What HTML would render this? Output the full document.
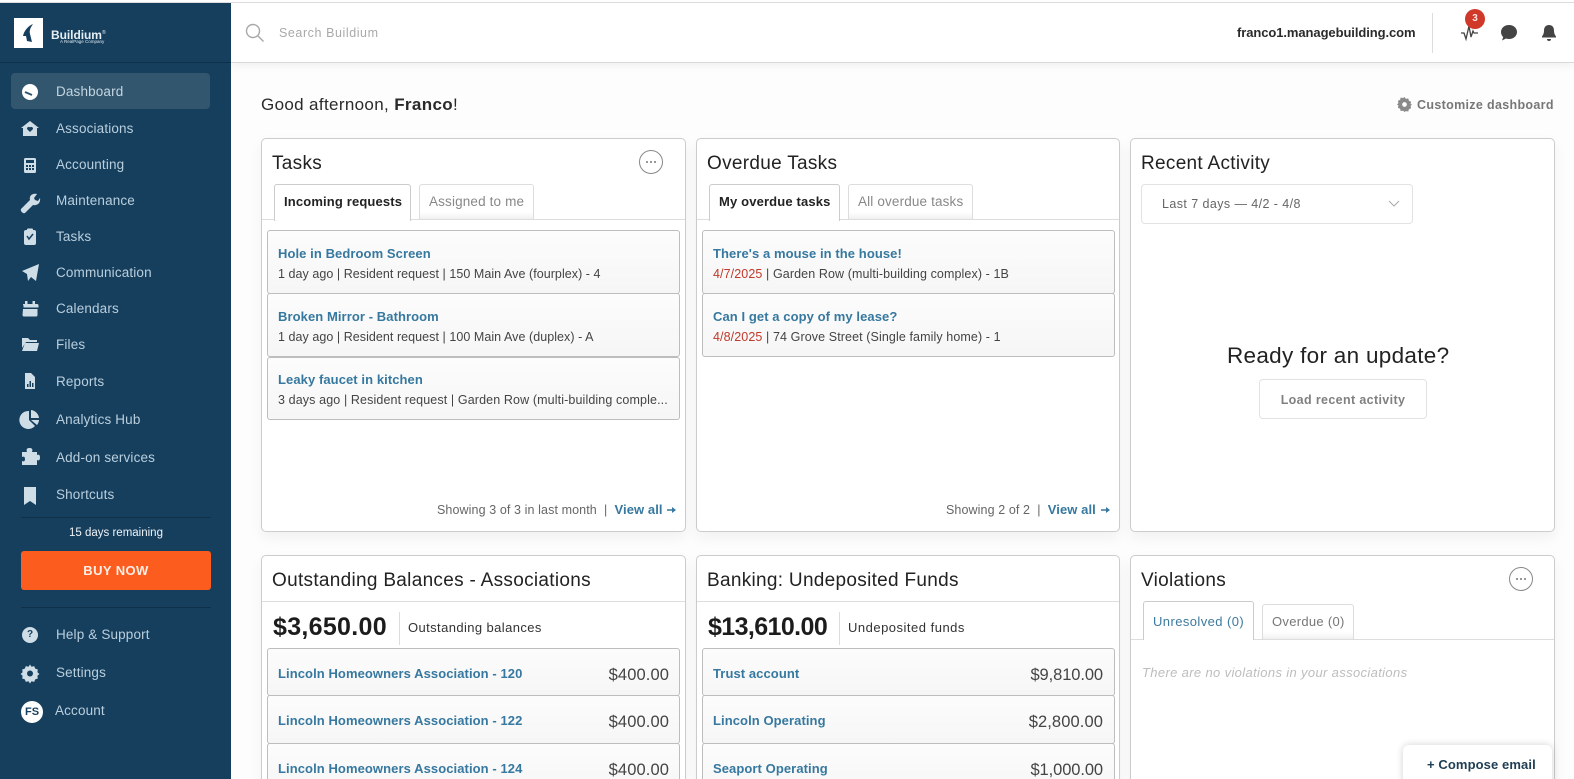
<!DOCTYPE html>
<html><head><meta charset="utf-8"><style>
html,body{margin:0;padding:0;width:1574px;height:779px;overflow:hidden;background:#fdfdfd;font-family:"Liberation Sans",sans-serif;color:#333}
#wrap{position:relative;width:1574px;height:779px;overflow:hidden;background:#fdfdfd}
.a,.t,svg.i{position:absolute}
.t{white-space:nowrap;line-height:20px;height:20px}
.card{position:absolute;background:#fff;border:1px solid #ccc;border-radius:5px;box-shadow:0 6px 14px rgba(0,0,0,.05);box-sizing:border-box}
.nav{left:56px;font-size:13.5px;color:#b9cfdd;letter-spacing:.15px}
.h{font-size:19px;color:#222;letter-spacing:.3px}
.li{position:absolute;box-sizing:border-box;border:1px solid #bdbdbd;border-radius:3px;background:linear-gradient(#fcfcfc,#f6f6f6)}
.lk{font-size:13px;font-weight:bold;color:#36789f;letter-spacing:.08px}
.sub{font-size:12.5px;color:#444;letter-spacing:.05px}
.amt{font-size:16.5px;color:#444;letter-spacing:.1px}
.tab{position:absolute;box-sizing:border-box;border:1px solid #ddd;border-bottom:none;background:linear-gradient(#fff 80%,#f0f0f0);border-radius:3px 3px 0 0}
.tab.on{border-color:#ccc;background:#fff;height:37px;z-index:2}
.tabt{font-size:13.5px;letter-spacing:.15px;z-index:3}
.hr{position:absolute;height:1px;background:#ddd}
.big{font-size:25px;font-weight:bold;color:#1c1c1c;letter-spacing:.3px}
.foot{font-size:12.5px;color:#666;letter-spacing:.1px}
.more{position:absolute;width:24px;height:24px;border:1px solid #888;border-radius:50%;box-sizing:border-box;background:#fff}
.more:before{content:"";position:absolute;left:6px;top:10px;width:2px;height:2px;border-radius:50%;background:#777;box-shadow:4px 0 #777,8px 0 #777}
</style></head><body><div id="wrap">
<div class="a" style="left:0;top:0;width:1574px;height:3px;background:#fff;border-bottom:1px solid #ddd;box-sizing:border-box"></div>
<div class="a" style="left:231px;top:3px;width:1343px;height:60px;background:#fff;border-bottom:1px solid #d9d9d9;box-shadow:0 3px 8px rgba(0,0,0,.05);box-sizing:border-box"></div>
<div class="a" style="left:0;top:3px;width:231px;height:776px;background:#163f5e"></div>
<div class="a" style="left:0;top:62px;width:231px;height:1px;background:#0f3049"></div>
<div class="a" style="left:14px;top:18px;width:29px;height:30px;background:#fff"></div>
<svg class="i" style="left:14px;top:18px" width="29" height="30" viewBox="0 0 29 30"><path d="M19 6C14 8 10 13 9 18L12 18L13 23L18 24L16 16C15 12 17 9 19 6Z" fill="#163f5e"/></svg>
<div class="t" style="left:51px;top:23px;font-size:12px;font-weight:bold;color:#e6eef3;letter-spacing:-.05px">Buildium<span style="font-size:5px;vertical-align:5px;font-weight:normal">®</span></div>
<div class="t" style="left:60px;top:32px;font-size:4.5px;color:#dde7ee">A RealPage Company</div>
<div class="a" style="left:11px;top:73px;width:199px;height:36px;background:#33566f;border-radius:4px"></div>

<div class="t nav" style="top:82px;color:#c3d5e0">Dashboard</div>
<div class="t nav" style="top:119px">Associations</div>
<div class="t nav" style="top:155px">Accounting</div>
<div class="t nav" style="top:191px">Maintenance</div>
<div class="t nav" style="top:227px">Tasks</div>
<div class="t nav" style="top:263px">Communication</div>
<div class="t nav" style="top:299px">Calendars</div>
<div class="t nav" style="top:335px">Files</div>
<div class="t nav" style="top:372px">Reports</div>
<div class="t nav" style="top:410px">Analytics Hub</div>
<div class="t nav" style="top:448px">Add-on services</div>
<div class="t nav" style="top:485px">Shortcuts</div>
<div class="t nav" style="top:625px">Help &amp; Support</div>
<div class="t nav" style="top:663px">Settings</div>
<div class="t nav" style="top:701px;left:55px">Account</div>

<svg class="i" style="left:0;top:0" width="231" height="779" viewBox="0 0 231 779" fill="#cfdde6">
<circle cx="30" cy="92" r="8" fill="#fff"/><path d="M25 92l7 3" stroke="#33566f" stroke-width="2"/>
<path d="M30 121l-9 7h2v8h14v-8h2z"/><path d="M30 132l-3-3a1.8 1.8 0 0 1 3-1.6a1.8 1.8 0 0 1 3 1.6z" fill="#163f5e"/>
<rect x="24" y="158" width="12" height="15" rx="1.5"/><path d="M26 160h8v3h-8zM26 165h2v2h-2zM29 165h2v2h-2zM32 165h2v2h-2zM26 168h2v2h-2zM29 168h2v2h-2zM32 168h2v2h-2z" fill="#163f5e"/>
<path d="M22 209l9-9c-1-4 2-7 7-6l-3 4 1 2 3 1 2-3c1 5-3 8-7 7l-8 8c-2 1-5-2-4-4z" transform="translate(-1 0)"/>
<rect x="24" y="230" width="12" height="15" rx="2"/><path d="M27 236l2 3 4-5" fill="none" stroke="#163f5e" stroke-width="1.5"/><rect x="27" y="228.500" width="6" height="3" rx="1"/>
<path d="M22 271l17-7-3 17-5-4-3 4-1-7z"/>
<path d="M23 304h14a1.500 1.500 0 0 1 1.500 1.500v2h-15v-2a1.500 1.500 0 0 1 -.500-1.500zM23 309h14.500v6a1.500 1.500 0 0 1-1.500 1.500h-12a1.500 1.500 0 0 1-1.500-1.500z"/><rect x="25" y="301" width="2.500" height="4"/><rect x="32.500" y="301" width="2.500" height="4"/>
<path d="M22 338h6l2 2h7v2H26l-4 6z"/><path d="M25 343h14l-2 8H22z"/>
<path d="M25 373h6l4 4v12H25z"/><path d="M27 387v-3h1.500v3zM29.500 387v-6H31v6zM32 387v-4h1.500v4z" fill="#163f5e"/>
<path d="M29 411v9l6 6a9 9 0 1 1-6-15z"/><path d="M31 410a9 9 0 0 1 8 8h-8zM31 420h8a9 9 0 0 1-2 5z"/>
<path d="M22 452h5c-1-3 0-4 2.500-4s3.500 1 2.500 4h5v3c2-1 3 0 3 2.500s-1 3.500-3 2.500v5H22v-4c2 1 3 0 3-2s-1-3-3-2z"/>
<path d="M24 487h12v18l-6-4-6 4z"/>
<circle cx="30" cy="635" r="8"/>
<path d="M30 665l1.500 2.200 2.700-.6 1 2.500 2.600.9-.4 2.700 2 1.800-2 1.800.4 2.700-2.600.9-1 2.500-2.700-.6-1.500 2.200-1.500-2.200-2.700.6-1-2.500-2.600-.9.400-2.700-2-1.800 2-1.800-.4-2.700 2.600-.9 1-2.500 2.700.6z" transform="translate(0 -.500)"/><circle cx="30" cy="673.500" r="3" fill="#163f5e"/>
<circle cx="32" cy="712" r="11" fill="#fff"/>
</svg>
<div class="t" style="left:25px;top:625px;width:10px;text-align:center;font-size:10px;font-weight:bold;color:#163f5e;">?</div>
<div class="t" style="left:21px;top:702px;width:22px;text-align:center;font-size:11px;font-weight:bold;color:#163f5e">FS</div>

<div class="a" style="left:21px;top:517px;width:190px;height:1px;background:#0f3049"></div>
<div class="t" style="left:21px;top:523px;width:190px;text-align:center;font-size:11.500px;color:#eef3f6">15 days remaining</div>
<div class="a" style="left:21px;top:551px;width:190px;height:39px;background:#fd5c1f;border-radius:3px"></div>
<div class="t" style="left:21px;top:561px;width:190px;text-align:center;font-size:13px;font-weight:bold;color:#fbeee6;letter-spacing:.4px">BUY NOW</div>
<div class="a" style="left:21px;top:607px;width:190px;height:1px;background:#0f3049"></div>

<svg class="i" style="left:245px;top:23px" width="20" height="20" viewBox="0 0 20 20" fill="none" stroke="#a8a8a8" stroke-width="1.400"><circle cx="8" cy="8" r="6.500"/><path d="M13 13l5.500 5.500"/></svg>
<div class="t" style="left:279px;top:23px;font-size:12.500px;color:#a9a9a9;letter-spacing:.57px">Search Buildium</div>
<div class="t" style="left:1237px;top:23px;font-size:13px;font-weight:bold;color:#2b2b2b;letter-spacing:-.08px;">franco1.managebuilding.com</div>
<div class="a" style="left:1432px;top:13px;width:1px;height:40px;background:#ddd"></div>
<svg class="i" style="left:1460px;top:24px" width="20" height="18" viewBox="0 0 20 18" fill="none" stroke="#444" stroke-width="1.300"><path d="M1 9h3l2 6 3-13 2 11 2-6 1 2h4"/></svg>
<div class="a" style="left:1465px;top:9px;width:20px;height:20px;border-radius:50%;background:#d0382a"></div>
<div class="t" style="left:1465px;top:9px;width:20px;text-align:center;font-size:10px;font-weight:bold;color:#fbe6df">3</div>
<svg class="i" style="left:1500px;top:24px" width="18" height="18" viewBox="0 0 18 18" fill="#444"><path d="M9 1c4.500 0 8 3 8 7s-3.500 7-8 7c-1 0-2-.2-3-.5L2 16.500l1.200-3.500C1.800 11.800 1 10 1 8c0-4 3.500-7 8-7z"/></svg>
<svg class="i" style="left:1541px;top:24px" width="16" height="18" viewBox="0 0 16 18" fill="#444"><path d="M8 1c3.500 0 5 2.500 5 5.500 0 3 1 4.500 2 6v1H1v-1c1-1.500 2-3 2-6C3 3.500 4.500 1 8 1z"/><path d="M6 15h4a2 2 0 0 1-4 0z"/></svg>

<div class="t" style="left:261px;top:95px;font-size:17px;color:#2a2a2a;letter-spacing:.35px">Good afternoon, <b>Franco</b>!</div>
<svg class="i" style="left:1397px;top:97px" width="15" height="15" viewBox="0 0 16 16" fill="#8a8a8a"><path d="M8 0l1.500 2 2.500-.5.700 2.500 2.300 1-.5 2.500L16 8l-1.500 1.500.5 2.500-2.300 1-.7 2.500-2.500-.5L8 16l-1.500-1.500-2.500.5-.7-2.500-2.300-1 .5-2.500L0 8l1.500-1.500L1 4l2.300-1L4 .5l2.500.5z"/><circle cx="8" cy="8" r="2.500" fill="#fff"/></svg>
<div class="t" style="left:1417px;top:95px;font-size:12.500px;font-weight:bold;color:#777;letter-spacing:.33px">Customize dashboard</div>

<div class="card" style="left:261px;top:138px;width:425px;height:394px"></div>
<div class="card" style="left:696px;top:138px;width:424px;height:394px"></div>
<div class="card" style="left:1130px;top:138px;width:425px;height:394px"></div>
<div class="card" style="left:261px;top:555px;width:425px;height:240px"></div>
<div class="card" style="left:696px;top:555px;width:424px;height:240px"></div>
<div class="card" style="left:1130px;top:555px;width:425px;height:240px"></div>

<div class="t h" style="left:272px;top:154px">Tasks</div>
<div class="more" style="left:639px;top:150px"></div>
<div class="hr" style="left:262px;top:219px;width:423px"></div>
<div class="tab on" style="left:274px;top:184px;width:137px"></div>
<div class="tab" style="left:419px;top:184px;width:115px;height:35px"></div>
<div class="t tabt" style="left:284px;top:192px;font-weight:bold;color:#222;font-size:13px">Incoming requests</div>
<div class="t tabt" style="left:429px;top:192px;color:#888">Assigned to me</div>
<div class="li" style="left:267px;top:230px;width:413px;height:64px"></div>
<div class="li" style="left:267px;top:293px;width:413px;height:64px"></div>
<div class="li" style="left:267px;top:357px;width:413px;height:63px"></div>
<div class="t lk" style="left:278px;top:244px">Hole in Bedroom Screen</div>
<div class="t sub" style="left:278px;top:264px">1 day ago | Resident request | 150 Main Ave (fourplex) - 4</div>
<div class="t lk" style="left:278px;top:307px">Broken Mirror - Bathroom</div>
<div class="t sub" style="left:278px;top:327px">1 day ago | Resident request | 100 Main Ave (duplex) - A</div>
<div class="t lk" style="left:278px;top:370px">Leaky faucet in kitchen</div>
<div class="t sub" style="left:278px;top:390px;letter-spacing:.12px">3 days ago | Resident request | Garden Row (multi-building comple...</div>
<div class="t foot" style="left:437px;top:500px">Showing 3 of 3 in last month &nbsp;|&nbsp; <b class="lk">View all</b></div>
<svg class="i" style="left:667px;top:507px" width="9" height="6" viewBox="0 0 9 6" fill="#36789f"><path d="M0 2.200h5V0l4 3-4 3V3.800H0z"/></svg>

<div class="t h" style="left:707px;top:154px">Overdue Tasks</div>
<div class="hr" style="left:697px;top:219px;width:422px"></div>
<div class="tab on" style="left:709px;top:184px;width:131px"></div>
<div class="tab" style="left:848px;top:184px;width:125px;height:35px"></div>
<div class="t tabt" style="left:719px;top:192px;font-weight:bold;color:#222;font-size:13px">My overdue tasks</div>
<div class="t tabt" style="left:858px;top:192px;color:#888">All overdue tasks</div>
<div class="li" style="left:702px;top:230px;width:413px;height:64px"></div>
<div class="li" style="left:702px;top:293px;width:413px;height:64px"></div>
<div class="t lk" style="left:713px;top:244px">There's a mouse in the house!</div>
<div class="t sub" style="left:713px;top:264px;letter-spacing:.1px"><span style="color:#c0392b">4/7/2025</span> | Garden Row (multi-building complex) - 1B</div>
<div class="t lk" style="left:713px;top:307px">Can I get a copy of my lease?</div>
<div class="t sub" style="left:713px;top:327px;letter-spacing:.1px"><span style="color:#c0392b">4/8/2025</span> | 74 Grove Street (Single family home) - 1</div>
<div class="t foot" style="left:946px;top:500px">Showing 2 of 2 &nbsp;|&nbsp; <b class="lk">View all</b></div>
<svg class="i" style="left:1101px;top:507px" width="9" height="6" viewBox="0 0 9 6" fill="#36789f"><path d="M0 2.200h5V0l4 3-4 3V3.800H0z"/></svg>

<div class="t h" style="left:1141px;top:154px">Recent Activity</div>
<div class="a" style="left:1141px;top:184px;width:272px;height:40px;border:1px solid #e2e2e2;border-radius:4px;box-sizing:border-box"></div>
<div class="t" style="left:1162px;top:194px;font-size:12.500px;color:#666;letter-spacing:.42px">Last 7 days — 4/2 - 4/8</div>
<svg class="i" style="left:1388px;top:200px" width="12" height="8" viewBox="0 0 12 8" fill="none" stroke="#aaa"><path d="M1 1l5 5 5-5"/></svg>
<div class="t" style="left:1227px;top:346px;font-size:22.500px;color:#222;letter-spacing:.3px">Ready for an update?</div>
<div class="a" style="left:1259px;top:379px;width:168px;height:40px;border:1px solid #e2e2e2;border-radius:4px;box-sizing:border-box"></div>
<div class="t" style="left:1259px;top:390px;width:168px;text-align:center;font-size:12.500px;font-weight:bold;color:#808080;letter-spacing:.36px">Load recent activity</div>

<div class="t h" style="left:272px;top:571px">Outstanding Balances - Associations</div>
<div class="hr" style="left:262px;top:601px;width:423px"></div>
<div class="t big" style="left:273px;top:617px">$3,650.00</div>
<div class="a" style="left:399px;top:612px;width:1px;height:33px;background:#ddd"></div>
<div class="t" style="left:408px;top:618px;font-size:13px;color:#333;letter-spacing:.4px">Outstanding balances</div>
<div class="li" style="left:267px;top:648px;width:413px;height:48px"></div>
<div class="li" style="left:267px;top:695px;width:413px;height:49px"></div>
<div class="li" style="left:267px;top:743px;width:413px;height:50px"></div>
<div class="t lk" style="left:278px;top:664px">Lincoln Homeowners Association - 120</div>
<div class="t lk" style="left:278px;top:711px">Lincoln Homeowners Association - 122</div>
<div class="t lk" style="left:278px;top:759px">Lincoln Homeowners Association - 124</div>
<div class="t amt" style="right:905px;top:665px">$400.00</div>
<div class="t amt" style="right:905px;top:712px">$400.00</div>
<div class="t amt" style="right:905px;top:760px">$400.00</div>

<div class="t h" style="left:707px;top:571px">Banking: Undeposited Funds</div>
<div class="hr" style="left:697px;top:601px;width:422px"></div>
<div class="t big" style="left:708px;top:617px;letter-spacing:-.6px">$13,610.00</div>
<div class="a" style="left:839px;top:612px;width:1px;height:33px;background:#ddd"></div>
<div class="t" style="left:848px;top:618px;font-size:13px;color:#333;letter-spacing:.5px">Undeposited funds</div>
<div class="li" style="left:702px;top:648px;width:413px;height:48px"></div>
<div class="li" style="left:702px;top:695px;width:413px;height:49px"></div>
<div class="li" style="left:702px;top:743px;width:413px;height:50px"></div>
<div class="t lk" style="left:713px;top:664px">Trust account</div>
<div class="t lk" style="left:713px;top:711px">Lincoln Operating</div>
<div class="t lk" style="left:713px;top:759px">Seaport Operating</div>
<div class="t amt" style="right:471px;top:665px;letter-spacing:-.1px">$9,810.00</div>
<div class="t amt" style="right:471px;top:712px">$2,800.00</div>
<div class="t amt" style="right:471px;top:760px;letter-spacing:-.1px">$1,000.00</div>

<div class="t h" style="left:1141px;top:571px">Violations</div>
<div class="more" style="left:1509px;top:567px"></div>
<div class="hr" style="left:1131px;top:639px;width:423px"></div>
<div class="tab on" style="left:1143px;top:601px;width:111px;height:39px"></div>
<div class="tab" style="left:1262px;top:604px;width:92px;height:35px"></div>
<div class="t tabt" style="left:1153px;top:612px;color:#3d7a9e;font-size:13px;letter-spacing:.42px">Unresolved (0)</div>
<div class="t tabt" style="left:1272px;top:612px;color:#777;font-size:13px;letter-spacing:.3px">Overdue (0)</div>
<div class="t" style="left:1142px;top:663px;font-size:13px;font-style:italic;color:#bdbdbd;letter-spacing:.35px">There are no violations in your associations</div>
<div class="a" style="left:1403px;top:745px;width:149px;height:40px;background:#fff;border-radius:6px 6px 0 0;box-shadow:0 0 8px rgba(0,0,0,.18)"></div>
<div class="t" style="left:1427px;top:755px;font-size:13px;font-weight:bold;color:#1f3d53;letter-spacing:.1px">+ Compose email</div>
</div></body></html>
